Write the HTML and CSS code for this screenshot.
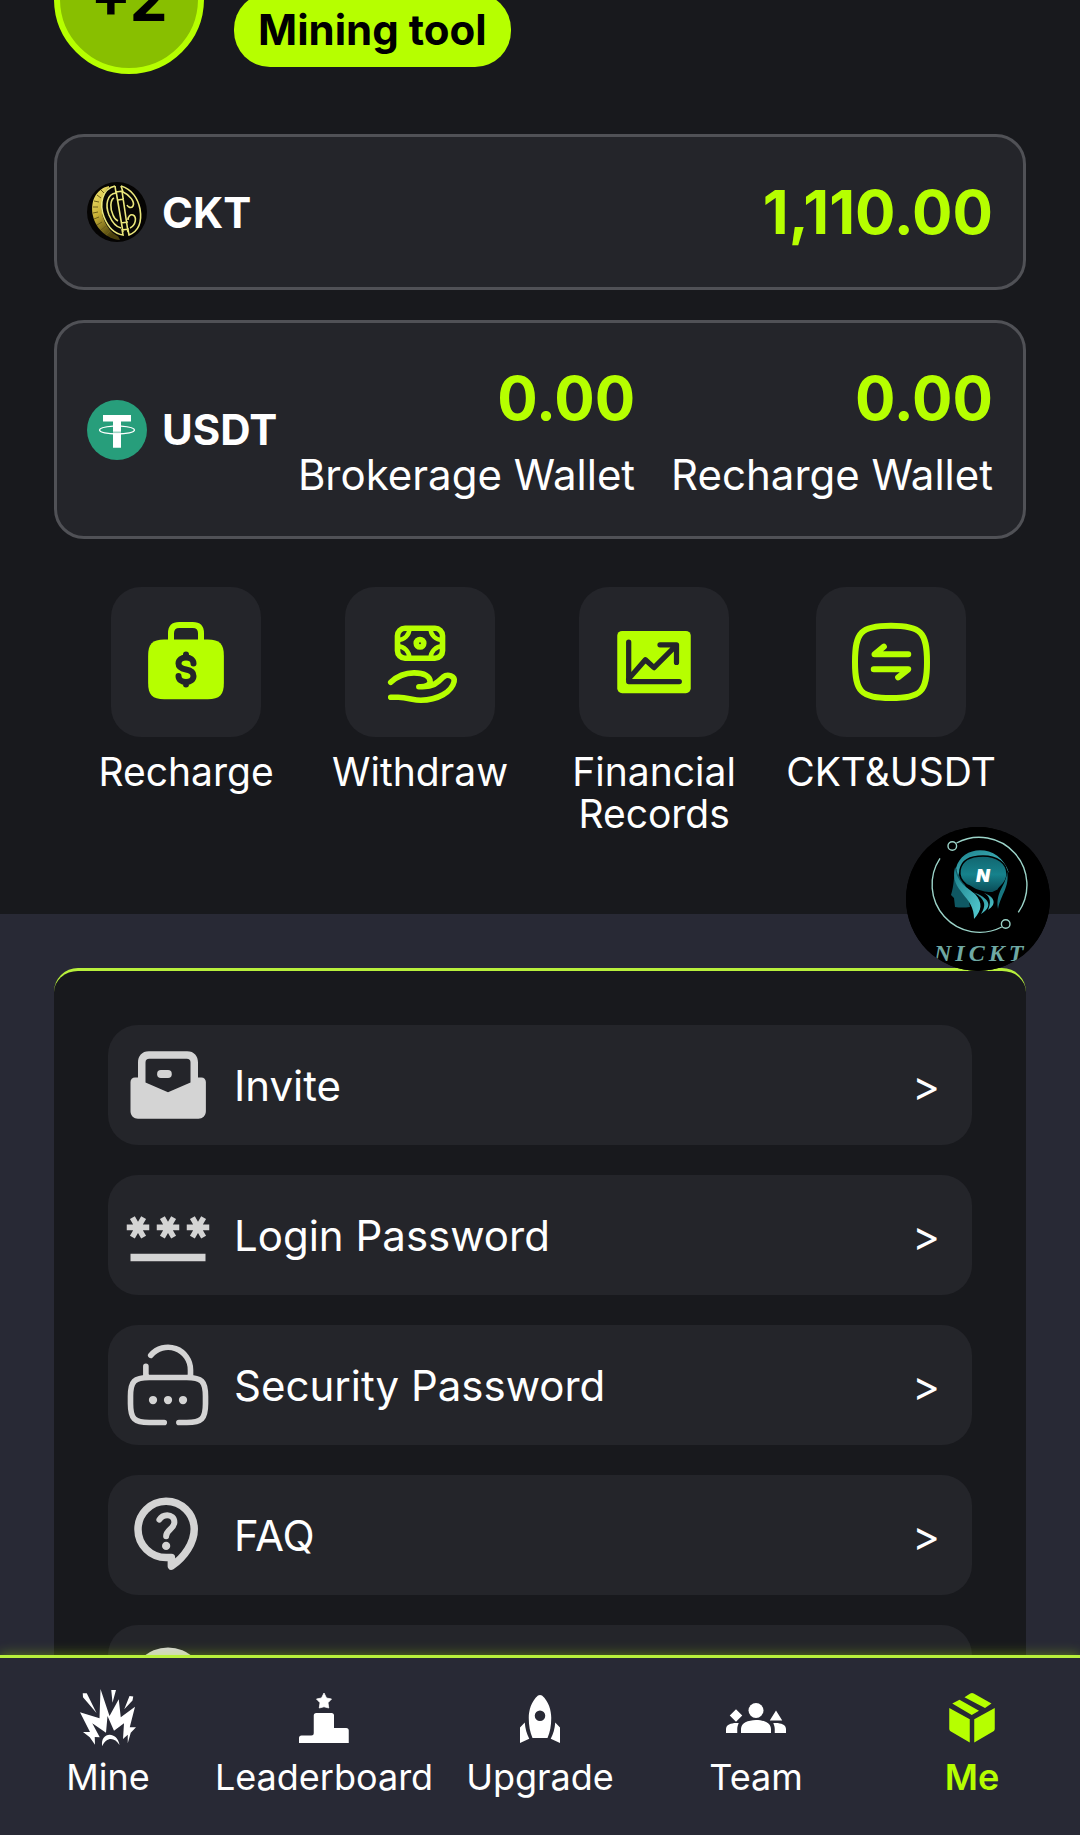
FILE: index.html
```html
<!DOCTYPE html>
<html lang="en">
<head>
  <meta charset="UTF-8">
  <meta name="viewport" content="width=device-width, initial-scale=1.0">
  <title>Me</title>
  <link rel="stylesheet" href="styles.css">
</head>
<body>
<div class="app">
  <main class="content">
    <section class="hero">
      <div class="profile">
        <div class="avatar">+2</div>
        <div class="profile-info">
          <button type="button" class="pill">Mining tool</button>
        </div>
      </div>

      <div class="card">
        <svg class="coin" viewBox="0 0 60 60" aria-hidden="true">
          <defs>
            <linearGradient id="gold" x1="0" y1="0" x2="0.5" y2="1">
              <stop offset="0" stop-color="#f6ec7a"/>
              <stop offset="0.5" stop-color="#c9b136"/>
              <stop offset="1" stop-color="#4a400c"/>
            </linearGradient>
          </defs>
          <circle cx="30" cy="30" r="30" fill="#050403"/>
          <path d="M22 4C8 7 3 21 6 34c3 13 14 23 27 24L24 40z" fill="url(#gold)"/>
          <g stroke="#6d5f18" stroke-width="1">
            <path d="M14 8l4 4M10 13l4 3M7 19l5 1M6 25h5M6 31l5-1M7 37l5-2M10 43l5-3M14 48l5-4M19 53l4-4"/>
          </g>
          <ellipse cx="34" cy="29" rx="19" ry="27" transform="rotate(-15 34 29)" fill="#080704"/>
          <g fill="none" stroke="#ece87c" stroke-width="1.600">
            <path d="M28 4C15 7 12 22 17 35c4 10 11 17 19 18l-1-6"/>
            <path d="M28 4l1 7C20 12 18 23 22 33c3 7 7 12 12 13"/>
            <path d="M27 16c-4 2-4 11-1 17 1 3 3 5 5 6"/>
            <path d="M29 9l7 41M35 9l6 41M29 10l7-1M31 18l6-1M34 41l7-1M35 48l7-1"/>
            <path d="M34 4c11 3 17 13 19 23 2 12-1 22-11 26l-1-5"/>
            <path d="M34 4l2 6c7 3 12 10 10 14-2 3-5 1-6-1M43 46c6-3 7-11 3-13-3-1-5 2-5 5"/>
          </g>
        </svg>
        <span class="coin-name">CKT</span>
        <div class="balances">
          <div class="balance"><strong>1,110.00</strong></div>
        </div>
      </div>

      <div class="card">
        <svg class="coin" viewBox="0 0 60 60" aria-hidden="true">
          <circle cx="30" cy="30" r="30" fill="#279e7b"/>
          <path d="M16 15h28v6.400H34v26.300h-8V21.400H16z" fill="#fff"/>
          <path d="M26 31.500h8v2h-8z" fill="#9fd3c3"/>
          <path d="M26 26.200C18 26.800 12.500 28 12.500 30c0 2.300 8 4 17.500 4s17.500-1.700 17.500-4c0-2-5.500-3.200-13.500-3.800" fill="none" stroke="#fff" stroke-width="1.300"/>
        </svg>
        <span class="coin-name">USDT</span>
        <div class="balances">
          <div class="balance"><strong>0.00</strong><span>Brokerage Wallet</span></div>
          <div class="balance"><strong>0.00</strong><span>Recharge Wallet</span></div>
        </div>
      </div>

      <div class="actions">
        <a href="#" class="action">
          <span class="tile">
            <svg class="icon-lg" viewBox="0 0 24 24" fill="none" stroke-linecap="round">
              <path d="M8 6.500V4.300Q8 2.100 10.200 2.100h3.600Q16 2.100 16 4.300v2.200" stroke="currentColor" stroke-width="1.600"/>
              <path d="M6.200 6H17.800C21 6 22.100 7.200 22.100 10.400v7.100c0 3.200-1.100 4.400-4.300 4.400H6.200c-3.200 0-4.300-1.200-4.300-4.400v-7.100C1.900 7.200 3 6 6.200 6z" fill="currentColor"/>
              <path d="M14 12.400c0-1-.9-1.600-2-1.600s-2 .6-2 1.600.9 1.400 2 1.600 2 .7 2 1.700-.9 1.600-2 1.600-2-.6-2-1.600M12 10v.6M12 17.400v.6" stroke="#24252a" stroke-width="1.600"/>
            </svg>
          </span>
          Recharge
        </a>
        <a href="#" class="action">
          <span class="tile">
            <svg class="icon-lg" viewBox="0 0 24 24" fill="none" stroke="currentColor" stroke-width="1.500" stroke-linecap="round" stroke-linejoin="round">
              <rect x="6" y="3" width="12" height="8" rx="2"/>
              <circle cx="12" cy="7" r="1"/>
              <path d="M9.200 3c0 1.800-1.400 3.200-3.200 3.200M14.800 3c0 1.800 1.400 3.200 3.200 3.200M9.200 11c0-1.800-1.400-3.200-3.200-3.200M14.800 11c0-1.800 1.400-3.200 3.200-3.200" stroke-width="1.200"/>
              <path d="M4.200 17.400C5.800 15.900 7.900 14.900 10.400 14.900c2.900 0 4.300 1 4.300 2.300 0 1-1.300 1.500-3 1.400 2 0 3.700 0 5.300-1.500l1.200-1.100c1.200-1 3.200-.2 2.900 1.200-.6 2.800-4.400 5-8.900 5-2 0-3.500-.8-6-.8H4.200"/>
            </svg>
          </span>
          Withdraw
        </a>
        <a href="#" class="action">
          <span class="tile">
            <svg class="icon-lg" viewBox="0 0 24 24" fill="none" stroke-linecap="round" stroke-linejoin="round">
              <rect x="2.200" y="3.700" width="19.600" height="16.600" rx="1.300" fill="currentColor"/>
              <path d="M5.250 6.700v10.500h13.500M5.250 16.500l4.450-5.100L12 13.500l6-6M13.600 7.400H18v4.700" stroke="#24252a" stroke-width="1.400"/>
            </svg>
          </span>
          Financial Records
        </a>
        <a href="#" class="action">
          <span class="tile">
            <svg class="icon-lg" viewBox="0 0 24 24" fill="none" stroke="currentColor" stroke-width="1.600" stroke-linecap="round" stroke-linejoin="round">
              <path d="M12 2.350C20 2.350 21.600 4 21.600 12S20 21.600 12 21.600 2.400 20 2.400 12 4 2.350 12 2.350z"/>
              <path d="M16.600 9.950h-9L10.100 7.900M7.400 13.950h9.200L13.900 16.100"/>
            </svg>
          </span>
          CKT&amp;USDT
        </a>
      </div>
    </section>

    <section class="panel">
      <a href="#" class="row">
        <svg class="row-icon" viewBox="0 0 24 24" fill="currentColor">
          <path fill-rule="evenodd" d="M6.900 3h10.200C19 3 20 4.300 20 6v4h.9c.7 0 1.200.5 1.200 1.200V19c0 1.200-.9 2-2 2H4c-1.100 0-2-.8-2-2v-7.800C2 10.500 2.500 10 3.200 10H4V6c0-1.700 1-3 2.900-3zM7 5Q6 5 6 6v5.300l6 2.600 6-2.600V6q0-1-1-1z"/>
          <rect x="9.100" y="8" width="3.900" height="2.100" rx="1"/>
        </svg>
        <span>Invite</span>
        <span class="arrow">&gt;</span>
      </a>
      <a href="#" class="row">
        <svg class="row-icon" viewBox="0 0 24 24" fill="currentColor">
          <path d="M2 17h20v2H2v-2zm1.150-4.050L4 11.470l.85 1.480 1.300-.75-.85-1.480H7v-1.500H5.300l.85-1.470L4.850 7 4 8.470 3.150 7l-1.300.75.85 1.470H1v1.500h1.700l-.85 1.480 1.300.75zm6.700-.75 1.300.75.85-1.480.85 1.480 1.300-.75-.85-1.480H15v-1.500h-1.700l.85-1.470-1.300-.75L12 8.470 11.150 7l-1.300.75.85 1.470H9v1.500h1.700l-.85 1.480zM23 9.220h-1.700l.85-1.470-1.300-.75L20 8.470 19.150 7l-1.300.75.85 1.470H17v1.500h1.700l-.85 1.480 1.300.75.85-1.480.85 1.480 1.300-.75-.85-1.480H23v-1.500z"/>
        </svg>
        <span>Login Password</span>
        <span class="arrow">&gt;</span>
      </a>
      <a href="#" class="row">
        <svg class="row-icon" viewBox="0 0 24 24" fill="none" stroke="currentColor" stroke-width="1.500" stroke-linecap="round">
          <path d="M14.900 22H17c4 0 5-1 5-5v-2c0-4-1-5-5-5H7c-4 0-5 1-5 5v2c0 4 1 5 5 5h4M6.100 9.800V7M7.400 4.100A6 6 0 0 1 18 8v1.800"/>
          <g fill="currentColor" stroke="none">
            <circle cx="8" cy="16" r="1.100"/><circle cx="12" cy="16" r="1.100"/><circle cx="16" cy="16" r="1.100"/>
          </g>
        </svg>
        <span>Security Password</span>
        <span class="arrow">&gt;</span>
      </a>
      <a href="#" class="row">
        <svg class="row-icon" viewBox="0 0 24 24" fill="none" stroke="currentColor" stroke-linecap="round">
          <path d="M12.900 18h-1.400A7.500 7.500 0 1 1 19 10.400c0 3.600-2.500 7.500-6.100 9.900z" stroke-width="2" stroke-linejoin="round"/>
          <path d="M9.700 7.900c.5-.9 1.300-1.200 2.100-1.200 1 0 1.900.7 1.900 1.900 0 1.700-2.200 2-2.200 3.700" stroke-width="1.600"/>
          <circle cx="11.500" cy="14.900" r="1.100" fill="currentColor" stroke="none"/>
        </svg>
        <span>FAQ</span>
        <span class="arrow">&gt;</span>
      </a>
      <a href="#" class="row">
        <svg class="row-icon" viewBox="0 0 24 24" fill="currentColor"><circle cx="12" cy="12" r="10"/></svg>
      </a>
    </section>
  </main>

  <nav class="tabbar">
    <a href="#" class="tab">
      <svg class="icon-sm" viewBox="0 0 24 24" fill="currentColor">
        <path d="M9 .4l3.600 10.800 3.700-6.700.8 7.200 5.700-4.200-2.100 8.200h2.500L21.100 17.900l-1.200 4.200v-3.400L18 20.400l.4-6.300-4 3-2.600-5.900-.6 6.700-5.500-3.800 3 5.600-2-.1.100 3.100-2.100-3L2 17.600h2.800L.8 9.700l7.800 2.400z"/>
        <path d="M1.900 2.100h1.600L7.400 10 2 3.700zM13.300.8h1.900l-1.400 5.100zM20.600 3.200l1.500.2-.3 1.600-3.300 3.500zM9.700 23.300c-1-5.900 6.100-6.200 6.900-.5-1.900-3.300-5.300-3.300-6.900.5z"/>
      </svg>
      Mine
    </a>
    <a href="#" class="tab">
      <svg class="icon-sm" viewBox="0 0 24 24" fill="currentColor">
        <path d="M2 22v-2q0-1 1-1h3.900q1 0 1-1v-7q0-1 1-1H15q1 0 1 1v5h4.900q1 0 1 1v5z"/>
        <path d="M12 2l1 2 2 .4-1.400 1.500.3 2.100L12 7.500l-1.900.5.3-2.100L9 4.400 11 4z" stroke="currentColor" stroke-width=".3"/>
      </svg>
      Leaderboard
    </a>
    <a href="#" class="tab">
      <svg class="icon-sm" viewBox="0 0 24 24" fill="currentColor">
        <path fill-rule="evenodd" d="M11.200 3q.8-.5 1.600 0c2.700 2.300 3.700 6 3.700 9 0 3-.5 5.700-1.500 8H9c-1-2.300-1.500-5-1.500-8 0-3 1-6.700 3.700-9zM12 9a2.100 2.100 0 1 0 0 4.200A2.100 2.100 0 0 0 12 9z"/>
        <path d="M5.900 13.800c.2 2.500.8 4.600 1.800 6.500L4 22v-6.200zM18.100 13.800c-.2 2.500-.8 4.600-1.800 6.500L20 22v-6.200z"/>
      </svg>
      Upgrade
    </a>
    <a href="#" class="tab">
      <svg class="icon-sm" viewBox="0 0 24 24" fill="currentColor">
        <circle cx="12" cy="9" r="3"/>
        <path d="M12 12.750c1.630 0 3.070.39 4.240.9 1.080.48 1.760 1.560 1.760 2.730V18H6v-1.610c0-1.180.68-2.260 1.760-2.730 1.170-.52 2.610-.91 4.240-.91zM4 13.500 1.500 11 4 8.500 6.500 11zM5.130 14.100c-.37-.06-.74-.1-1.130-.1-.99 0-1.930.21-2.780.58C.48 14.900 0 15.620 0 16.430V18h4.500v-1.610c0-.83.23-1.610.63-2.290zM20 14c-.39 0-.76.04-1.130.1.400.68.630 1.460.630 2.290V18H24v-1.570c0-.81-.48-1.530-1.220-1.850C21.930 14.210 20.990 14 20 14zM20 9l2.500 4h-5z"/>
      </svg>
      Team
    </a>
    <a href="#" class="tab active">
      <svg class="icon-sm" viewBox="0 0 24 24" fill="currentColor">
        <path d="M2.900 8l8.200 4.500V21.800L3.400 17.300q-.5-.3-.5-.9zM21.100 8l-8.200 4.500V21.800l7.700-4.500q.5-.3.500-.9zM9 3.700l2.300-1.500q.7-.4 1.400 0l7.100 4L17.200 8zM4.100 6.200 7 4.700l7.800 4.400-2.900 1.700z"/>
      </svg>
      Me
    </a>
  </nav>

  <button type="button" class="bubble" aria-label="NICKT">
    <svg viewBox="0 0 144 144">
      <defs>
        <linearGradient id="teal" x1="0" y1="0" x2="0" y2="1">
          <stop offset="0" stop-color="#12656f"/>
          <stop offset="0.5" stop-color="#16828c"/>
          <stop offset="1" stop-color="#0b4a55"/>
        </linearGradient>
        <linearGradient id="strand" x1="0" y1="0" x2="1" y2="1">
          <stop offset="0" stop-color="#1a7f8a"/>
          <stop offset="1" stop-color="#56cdd2"/>
        </linearGradient>
      </defs>
      <rect width="144" height="144" fill="#000"/>
      <g fill="none" stroke="#9bd3c8" stroke-width="1.400">
        <path d="M50.500 16A47.700 47.700 0 0 1 112.300 85.300"/>
        <path d="M95.700 100A47.700 47.700 0 0 1 34 31.300"/>
        <circle cx="46.300" cy="19" r="4.300"/>
        <circle cx="99.700" cy="97" r="4.300"/>
      </g>
      <path d="M49 40c-1 9-1 19-4 28l3 3 1 9q7 1 15 0l-4-20z" fill="#0f5863"/>
      <path d="M50 41C56 17 94 16 103 46 92 25 62 25 52 48z" fill="url(#strand)"/>
      <path d="M54 43c2-11 13-14 23-14 14 0 24 7 24 18 0 9-6 11-9 16-6 4-13 3-18 1-7-1-8-5-13-6-6-4-8-9-7-15z" fill="url(#teal)" stroke="#000" stroke-width="1.500"/>
      <path d="M49 41c-6 23 20 28 19 51 8-9 9-16 1-25-8-7-17-10-20-26z" fill="url(#strand)"/>
      <path d="M67 65c10 6 15 11 8 22 13-8 8-16-8-22zM78 66c7 4 7 10 4 17 9-6 7-13-4-17z" fill="url(#strand)"/>
      <path d="M101 44c0 14-12 20-9 38 3-15 12-22 9-38z" fill="#187781"/>
      <text x="77" y="55" text-anchor="middle" class="bubble-letter">N</text>
      <text x="28" y="134" class="bubble-name">NICKT</text>
    </svg>
  </button>
</div>
</body>
</html>
```
FILE: styles.css
```css
* { box-sizing: border-box; margin: 0; padding: 0; }

body {
  font-family: Inter, "Liberation Sans", sans-serif;
  font-size: 42px;
  line-height: 1.5;
  color: #fff;
  background: #282935;
}
a { color: inherit; text-decoration: none; }
button { font: inherit; border: none; cursor: pointer; }
svg { display: block; flex: none; }

.app { position: relative; display: flex; flex-direction: column; height: 100vh; overflow: hidden; }
.content { flex: 1; min-height: 0; overflow: hidden; }

/* top part, scrolled a bit under the edge */
.hero { padding: 0 54px 79px; background: #18191d; }
.profile { display: flex; align-items: flex-end; gap: 30px; margin-top: -76px; margin-bottom: 60px; }
.avatar {
  width: 150px;
  height: 150px;
  border: 6px solid #b6ff00;
  border-radius: 50%;
  background: #88bf00;
  color: #000;
  font-size: 60px;
  font-weight: 700;
  display: flex;
  align-items: center;
  justify-content: center;
}
.profile-info { padding-bottom: 7px; }
.pill {
  display: block;
  padding: 12px 24px;
  border-radius: 36px;
  background: #b6ff00;
  color: #000;
  font-weight: 700;
  line-height: 50px;
}

/* balances */
.card {
  display: flex;
  align-items: center;
  padding: 30px;
  margin-bottom: 30px;
  background: #24252a;
  border: 3px solid #505156;
  border-radius: 30px;
}
.coin { width: 60px; height: 60px; margin-right: 15px; }
.coin-name { font-weight: 700; }
.balances { display: flex; gap: 36px; margin-left: auto; text-align: right; }
.balance strong { display: block; font-size: 60px; color: #b6ff00; }
.balance span { display: block; }

/* actions */
.actions { display: flex; margin: 48px 15px 0; }
.action {
  flex: 1;
  padding: 0 15px;
  font-size: 39px;
  line-height: 42px;
  text-align: center;
}
.tile {
  width: 150px;
  height: 150px;
  margin: 0 auto 14px;
  border-radius: 30px;
  background: #24252a;
  color: #b6ff00;
  display: flex;
  align-items: center;
  justify-content: center;
}
.icon-lg { width: 90px; height: 90px; }

/* menu */
.panel {
  margin: 54px 54px 0;
  padding: 54px;
  background: #18191d;
  border-top: 3px solid #b8f03c;
  border-radius: 24px;
}
.row {
  display: flex;
  align-items: center;
  height: 120px;
  padding: 0 32px 0 15px;
  margin-bottom: 30px;
  border-radius: 30px;
  background: #24252a;
}
.row-icon { width: 90px; height: 90px; margin-right: 21px; color: #d4d4d4; }
.arrow { margin-left: auto; }

/* bottom tabs */
.tabbar {
  position: relative;
  flex: none;
  display: flex;
  height: 180px;
  padding-top: 30px;
  background: #282935;
  border-top: 3px solid #b8f03c;
  box-shadow: 0 0 12px rgba(182, 255, 0, 0.4);
}
.tab {
  flex: 1 1 0;
  min-width: 0;
  display: flex;
  flex-direction: column;
  align-items: center;
  font-size: 36px;
  line-height: 54px;
}
.tab.active { color: #b6ff00; font-weight: 600; }
.icon-sm { width: 60px; height: 60px; margin-bottom: 2px; }

/* floating logo, stays over the page */
.bubble {
  position: absolute;
  right: 30px;
  top: 827px;
  width: 144px;
  height: 144px;
  border-radius: 50%;
  overflow: hidden;
  background: #000;
}
.bubble-letter { font: italic 900 18px Inter, sans-serif; fill: #fff; }
.bubble-name { font: italic 700 24px "Liberation Serif", serif; letter-spacing: 4px; fill: #6fa8a3; }
```
